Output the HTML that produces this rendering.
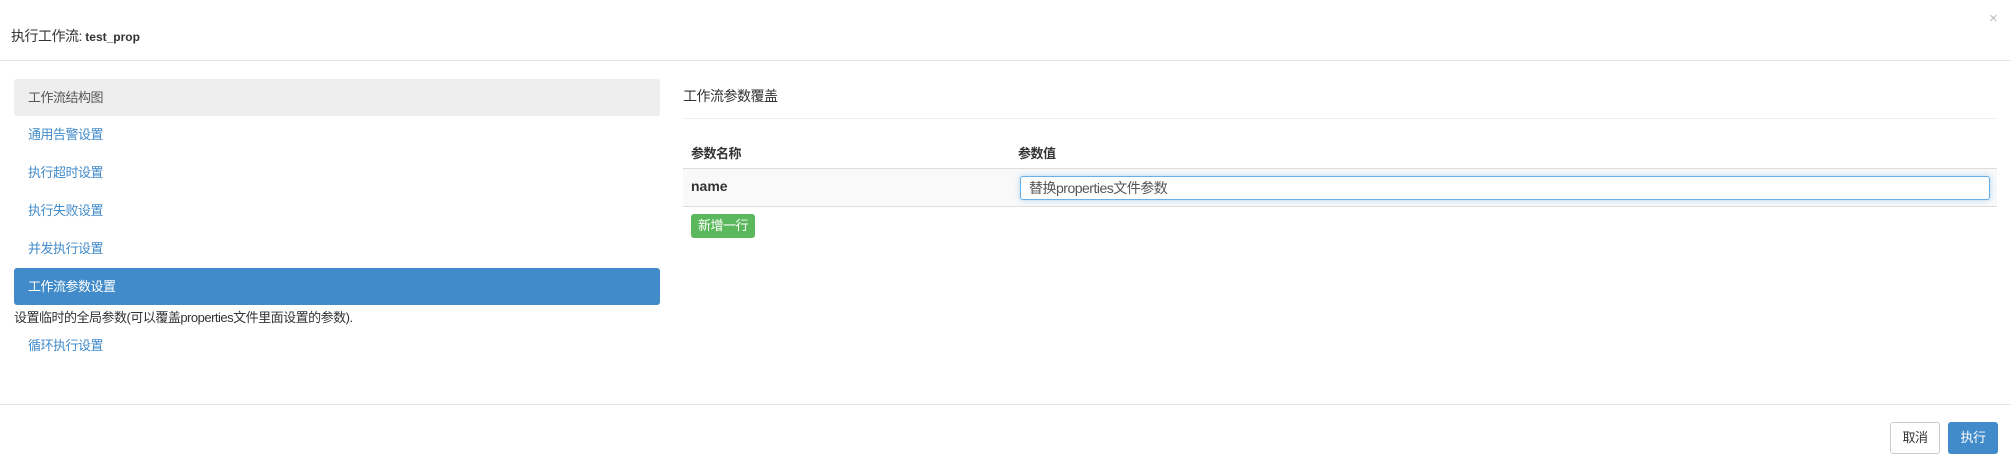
<!DOCTYPE html>
<html><head><meta charset="utf-8"><style>
*{box-sizing:border-box;margin:0;padding:0}
body{width:2011px;height:470px;background:#fff;font-family:"Liberation Sans","Noto Sans CJK SC",sans-serif;font-size:13px;color:#333;position:relative;overflow:hidden;letter-spacing:-0.5px}
.abs{position:absolute}
.nav{position:absolute;left:14px;width:646px;height:37px;line-height:37px;padding-left:14px;color:#428bca;border-radius:3px}
</style></head><body>
<div class="abs" style="left:11px;top:26px;font-size:14px;color:#333">执行工作流: <b style="font-size:12px;letter-spacing:0">test_prop</b></div>
<div class="abs" style="left:1989px;top:10px;font-size:15px;color:#bbb">×</div>
<div class="abs" style="left:0;top:60px;width:2011px;height:1px;background:#e5e5e5"></div>

<div class="nav" style="top:79px;background:#eee;color:#555">工作流结构图</div>
<div class="nav" style="top:116px">通用告警设置</div>
<div class="nav" style="top:154px">执行超时设置</div>
<div class="nav" style="top:192px">执行失败设置</div>
<div class="nav" style="top:230px">并发执行设置</div>
<div class="nav" style="top:268px;background:#428bca;color:#fff">工作流参数设置</div>
<div class="abs" style="left:14px;top:307px;color:#333">设置临时的全局参数(可以覆盖properties文件里面设置的参数).</div>
<div class="nav" style="top:327px">循环执行设置</div>

<div class="abs" style="left:683px;top:86px;font-size:14px;color:#333">工作流参数覆盖</div>
<div class="abs" style="left:683px;top:118px;width:1314px;height:1px;background:#eee"></div>
<div class="abs" style="left:691px;top:143px;font-weight:bold">参数名称</div>
<div class="abs" style="left:1018px;top:143px;font-weight:bold">参数值</div>
<div class="abs" style="left:683px;top:168px;width:1314px;height:39px;background:#f9f9f9;border-top:1px solid #ddd;border-bottom:1px solid #ddd"></div>
<div class="abs" style="left:691px;top:178px;font-weight:bold;font-size:14px;letter-spacing:0">name</div>
<div class="abs" style="left:1020px;top:176px;width:970px;height:24px;border:1px solid #66afe9;border-radius:3px;background:#fff;box-shadow:0 0 6px rgba(102,175,233,.5);padding-left:8px;line-height:22px;font-size:14px;color:#555">替换properties文件参数</div>
<div class="abs" style="left:691px;top:214px;width:64px;height:24px;background:#5cb85c;border-radius:3px;color:#fff;line-height:24px;text-align:center">新增一行</div>

<div class="abs" style="left:0;top:404px;width:2011px;height:1px;background:#e5e5e5"></div>
<div class="abs" style="left:1890px;top:422px;width:50px;height:32px;border:1px solid #ccc;border-radius:3px;line-height:30px;text-align:center;color:#333">取消</div>
<div class="abs" style="left:1948px;top:422px;width:50px;height:32px;background:#428bca;border-radius:3px;line-height:32px;text-align:center;color:#fff">执行</div>
</body></html>
